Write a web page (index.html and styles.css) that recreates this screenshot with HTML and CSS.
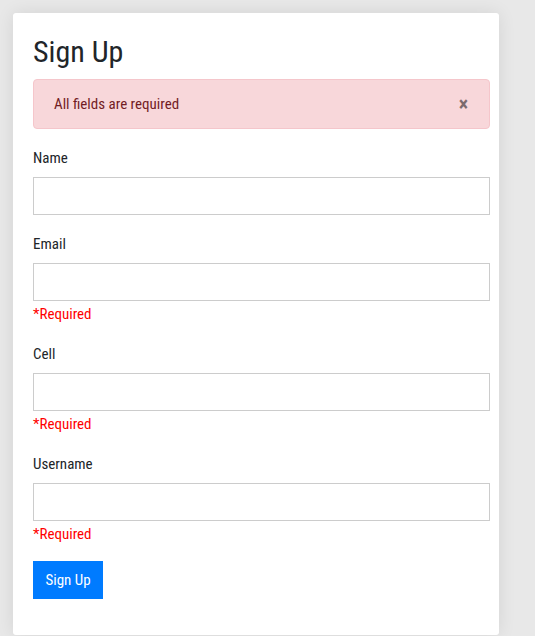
FILE: index.html
```html
<!DOCTYPE html>
<html lang="en">
<head>
<meta charset="utf-8">
<title>Sign Up</title>
<link rel="stylesheet" href="styles.css">
</head>
<body>
<div class="card">
  <h2 class="title">Sign Up</h2>
  <div class="alert">
    <span>All fields are required</span>
    <span class="close">&times;</span>
  </div>
  <form class="form">
    <div class="group">
      <label class="label">Name</label>
      <input class="input" type="text">
    </div>
    <div class="group">
      <label class="label">Email</label>
      <input class="input" type="text">
      <div class="error">*Required</div>
    </div>
    <div class="group">
      <label class="label">Cell</label>
      <input class="input" type="text">
      <div class="error">*Required</div>
    </div>
    <div class="group">
      <label class="label">Username</label>
      <input class="input" type="text">
      <div class="error">*Required</div>
    </div>
    <button class="btn" type="button">Sign Up</button>
  </form>
</div>
</body>
</html>
```
FILE: styles.css
```css
html, body {
  margin: 0;
  padding: 0;
}
body {
  background: #e8e8e8;
  font-family: "Ubuntu Condensed", "Liberation Sans Narrow", "Roboto Condensed", "Open Sans Condensed", "Liberation Sans", sans-serif;
  font-stretch: condensed;
  color: #212529;
  height: 636px;
  overflow: hidden;
}
.card {
  box-sizing: border-box;
  margin: 13px 0 0 13px;
  width: 486px;
  padding: 20px 9px 36px 20px;
  background: #fff;
  border-radius: 3px;
  box-shadow: 0 0 18px rgba(0,0,0,0.09);
}
.title {
  margin: 0 0 8px;
  font-size: 30px;
  line-height: 38px;
  font-weight: 400;
}
.alert {
  display: flex;
  justify-content: space-between;
  align-items: center;
  padding: 12px 20px;
  line-height: 24px;
  font-size: 15px;
  background: #f8d7da;
  border: 1px solid #f5c6cb;
  border-radius: 4px;
  color: #721c24;
  margin-bottom: 16px;
}
.close {
  font-size: 20px;
  font-weight: 700;
  color: #000;
  opacity: 0.5;
  line-height: 24px;
  margin-right: 1px;
}
.form {
  display: flex;
  flex-direction: column;
  margin: 0;
}
.group {
  display: flex;
  flex-direction: column;
  margin-bottom: 16px;
}
.label {
  font-size: 15px;
  line-height: 24px;
  padding-top: 1px;
  margin-bottom: 7px;
}
.input {
  box-sizing: border-box;
  height: 38px;
  width: 100%;
  margin: 0;
  border: 1px solid #ccc;
  border-radius: 0;
  background: #fff;
}
.error {
  color: #f00;
  font-size: 15px;
  line-height: 24px;
  padding-top: 1px;
  margin-bottom: -1px;
}
.btn {
  align-self: flex-start;
  box-sizing: border-box;
  height: 38px;
  width: 70px;
  padding: 0;
  border: none;
  border-radius: 0;
  background: #007bff;
  color: #fff;
  font-family: inherit;
  font-stretch: condensed;
  font-size: 15px;
}
```
